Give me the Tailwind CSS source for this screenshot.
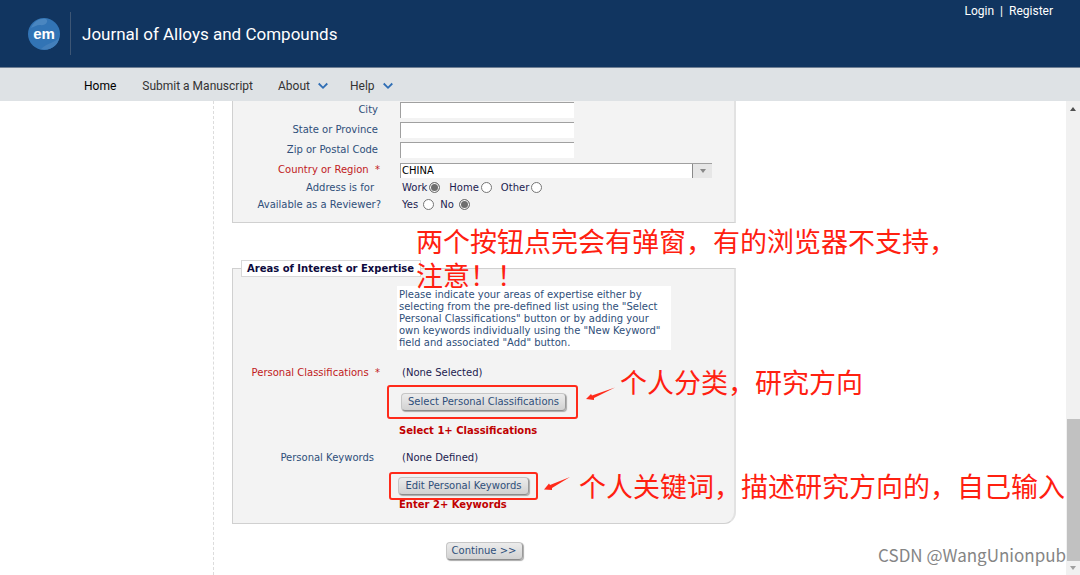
<!DOCTYPE html>
<html lang="en">
<head>
    <meta charset="UTF-8" />
    <meta name="viewport" content="width=device-width, initial-scale=1" />
    <title>Journal of Alloys and Compounds</title>
    <script src="https://cdn.jsdelivr.net/npm/@tailwindcss/browser@4"></script>
</head>
<body class="h-screen overflow-hidden bg-white flex flex-col font-['Roboto',sans-serif]">
    <header class="flex items-center shrink-0 h-[68px] pl-7 pr-[27px] bg-[#113560] border-b border-[#6f7f94] text-white">
        <svg class="w-8 h-8" viewBox="0 0 32 32" role="img" aria-label="Editorial Manager">
            <circle cx="16" cy="16" r="16" fill="#3274b5" />
            <path d="M3 10C6 3 12 0 18 1C21 3 18 8 12 7C8 7 6 9 3 10Z" fill="#4a86c0" />
            <path d="M31 19C28 25 20 24 13 31C23 33 31 27 31 19Z" fill="#437fbb" />
            <text x="16" y="21" text-anchor="middle" fill="#fff" font-family="Liberation Sans, sans-serif" font-weight="700" font-size="15">em</text>
        </svg>
        <div class="w-px h-[43px] ml-[10px] mr-[11px] bg-[#3d5675]"></div>
        <h1 class="text-[17px] leading-6">Journal of Alloys and Compounds</h1>
        <div class="self-start ml-auto pt-[3px] flex gap-[6px] text-[12px] leading-4">
            <a href="#">Login</a>
            <span>|</span>
            <a href="#">Register</a>
        </div>
    </header>

    <nav class="flex items-center shrink-0 h-[33px] pt-[2px] pl-[84px] gap-[26px] bg-[#dee2e5] text-[12px] text-[#333]">
        <a href="#" class="text-black">Home</a>
        <a href="#" class="-mr-px">Submit a Manuscript</a>
        <a href="#" class="flex items-center gap-2 -mr-1">About
            <svg class="w-[10px] h-[10px]" viewBox="0 0 10 10" fill="none" stroke="#2f6eb5" stroke-width="1.8"><path d="M0.7 2.5L5 6.8L9.3 2.5" /></svg>
        </a>
        <a href="#" class="flex items-center gap-2">Help
            <svg class="w-[10px] h-[10px]" viewBox="0 0 10 10" fill="none" stroke="#2f6eb5" stroke-width="1.8"><path d="M0.7 2.5L5 6.8L9.3 2.5" /></svg>
        </a>
    </nav>

    <div class="relative flex flex-1 min-h-0">
        <aside class="w-[214px] shrink-0 border-r border-dashed border-[#dcdcdc]"></aside>

        <main class="flex-1 min-w-0 pl-[18px] overflow-hidden font-['DejaVu_Sans',sans-serif] text-[10px] leading-3 text-[#2f4f7a]">
            <form class="w-[504px]">
                <section class="pb-[9px] bg-[#f3f3f3] border border-t-0 border-[#d0d0d0] border-r-2 border-r-[#e2e2e2]">
                    <div class="flex flex-col gap-[2px]">
                        <div class="flex items-center h-[18px]">
                            <label for="city" class="w-[145px] mr-[22px] text-right">City</label>
                            <input id="city" type="text" class="w-[174px] h-4 bg-white border-t border-l border-[#a0a0a0]" />
                        </div>
                        <div class="flex items-center h-[18px]">
                            <label for="state" class="w-[145px] mr-[22px] text-right">State or Province</label>
                            <input id="state" type="text" class="w-[174px] h-4 bg-white border-t border-l border-[#a0a0a0]" />
                        </div>
                        <div class="flex items-center h-[18px]">
                            <label for="zip" class="w-[145px] mr-[22px] text-right">Zip or Postal Code</label>
                            <input id="zip" type="text" class="w-[174px] h-4 bg-white border-t border-l border-[#a0a0a0]" />
                        </div>
                        <div class="flex items-center h-[18px]">
                            <label for="country" class="w-[147px] mr-5 text-right text-[#c11a22]">Country or Region&nbsp; *</label>
                            <div class="relative w-[312px]">
                                <select id="country" class="block w-full h-[15px] pl-[1px] appearance-none bg-white border-t border-l border-[#a0a0a0] text-black">
                                    <option>CHINA</option>
                                </select>
                                <span class="absolute right-0 top-px w-5 h-[14px] flex items-center justify-center bg-[#e6e6e6] border-l border-[#8a8a8a] pointer-events-none">
                                    <svg class="w-[6px] h-1" viewBox="0 0 6 4"><path d="M0 0H6L3 4Z" fill="#888" /></svg>
                                </span>
                            </div>
                        </div>
                    </div>
                    <div class="flex items-center h-[17px]" role="radiogroup" aria-labelledby="address-label">
                        <span id="address-label" class="w-[141px] mr-[28px] text-right">Address is for</span>
                        <div class="flex gap-[9px] text-[#1c1c50]">
                            <label class="flex items-center gap-[2px]">Work<input type="radio" name="address" checked class="w-[11px] h-[11px] appearance-none rounded-full border border-[#767676] bg-white checked:bg-[#6e6e6e] checked:shadow-[inset_0_0_0_1px_#fff]" /></label>
                            <label class="flex items-center gap-[2px]">Home<input type="radio" name="address" class="w-[11px] h-[11px] appearance-none rounded-full border border-[#767676] bg-white checked:bg-[#6e6e6e] checked:shadow-[inset_0_0_0_1px_#fff]" /></label>
                            <label class="flex items-center gap-[2px]">Other<input type="radio" name="address" class="w-[11px] h-[11px] appearance-none rounded-full border border-[#767676] bg-white checked:bg-[#6e6e6e] checked:shadow-[inset_0_0_0_1px_#fff]" /></label>
                        </div>
                    </div>
                    <div class="flex items-center h-[17px]" role="radiogroup" aria-labelledby="reviewer-label">
                        <span id="reviewer-label" class="w-[148px] mr-[21px] text-right whitespace-nowrap">Available as a Reviewer?</span>
                        <div class="flex gap-[6px] text-[#1c1c50]">
                            <label class="flex items-center gap-[5px]">Yes<input type="radio" name="reviewer" class="w-[11px] h-[11px] appearance-none rounded-full border border-[#767676] bg-white checked:bg-[#6e6e6e] checked:shadow-[inset_0_0_0_1px_#fff]" /></label>
                            <label class="flex items-center gap-[5px]">No<input type="radio" name="reviewer" checked class="w-[11px] h-[11px] appearance-none rounded-full border border-[#767676] bg-white checked:bg-[#6e6e6e] checked:shadow-[inset_0_0_0_1px_#fff]" /></label>
                        </div>
                    </div>
                </section>

                <fieldset class="mt-[37px] bg-[#f3f3f3] border border-[#d0d0d0] border-r-2 border-r-[#e2e2e2] rounded-br-xl">
                    <legend class="ml-2 w-[180px] h-[17px] px-[5px] bg-white border border-[#d8d8d8] font-bold leading-[15px] text-[#0d0a3d]">Areas of Interest or Expertise</legend>
                    <p class="w-[274px] mt-[9px] ml-[164px] pt-[3px] pb-px pl-[2px] bg-white whitespace-nowrap">
                        Please indicate your areas of expertise either by<br />
                        selecting from the pre-defined list using the "Select<br />
                        Personal Classifications" button or by adding your<br />
                        own keywords individually using the "New Keyword"<br />
                        field and associated "Add" button.
                    </p>
                    <div class="flex mt-[17px]">
                        <span class="w-[147px] mr-[7px] text-right text-[#c11a22] whitespace-nowrap">Personal Classifications&nbsp; *</span>
                        <div class="text-[#1c1c50]">
                            <p class="pl-[15px]">(None Selected)</p>
                            <div class="mt-[6px] w-[191px] h-[34px] pl-3 flex items-center border-2 border-[#ff2a1a] rounded-[3px]">
                                <button type="button" class="w-[165px] h-[18px] rounded-[4px] border border-[#c6c6c6] border-b-[#8c8c8c] border-r-[#9a9a9a] bg-linear-to-b from-[#ececec] to-[#d2d2d2] shadow-[1px_1px_1px_#aaa] text-[#2f4f7a] whitespace-nowrap">Select Personal Classifications</button>
                            </div>
                            <p class="mt-[6px] pl-3 font-bold text-[#c00000]">Select 1+ Classifications</p>
                        </div>
                    </div>
                    <div class="flex mt-[15px] pb-3">
                        <span class="w-[141px] mr-[15px] text-right">Personal Keywords</span>
                        <div class="text-[#1c1c50]">
                            <p class="pl-[13px]">(None Defined)</p>
                            <div class="mt-2 w-[149px] h-[28px] flex items-center justify-center border-2 border-[#ff2a1a] rounded-[3px]">
                                <button type="button" class="w-[131px] h-[18px] rounded-[4px] border border-[#c6c6c6] border-b-[#8c8c8c] border-r-[#9a9a9a] bg-linear-to-b from-[#ececec] to-[#d2d2d2] shadow-[1px_1px_1px_#aaa] text-[#2f4f7a] whitespace-nowrap">Edit Personal Keywords</button>
                            </div>
                            <p class="-mt-px pl-[10px] font-bold text-[#c00000]">Enter 2+ Keywords</p>
                        </div>
                    </div>
                </fieldset>

                <div class="flex justify-center mt-[18px]">
                    <button type="button" class="w-[77px] h-[18px] rounded-[4px] border border-[#c6c6c6] border-b-[#8c8c8c] border-r-[#9a9a9a] bg-linear-to-b from-[#ececec] to-[#d2d2d2] shadow-[1px_1px_1px_#aaa] text-[#2f4f7a] whitespace-nowrap">Continue &gt;&gt;</button>
                </div>
            </form>
        </main>

        <!-- scrollbar -->
        <div class="w-[14px] shrink-0 flex flex-col items-center justify-between bg-[#f1f1f1]">
            <svg class="w-[14px] h-4" viewBox="0 0 14 16"><path d="M4 10L7 6L10 10Z" fill="#505050" /></svg>
            <div class="mt-auto w-[13px] h-[142px] bg-[#c1c1c1]"></div>
            <svg class="w-[14px] h-[14px]" viewBox="0 0 14 14"><path d="M4 5H10L7 9Z" fill="#a0a0a0" /></svg>
        </div>

        <!-- notes written over the form -->
        <p lang="zh" class="absolute left-[416px] top-[123px] text-[27px] leading-[34px] text-[#ff2010] whitespace-nowrap font-['Noto_Sans_CJK_SC',sans-serif]">两个按钮点完会有弹窗，有的浏览器不支持，<br />注意！！</p>
        <p lang="zh" class="absolute left-[620px] top-[264px] text-[27px] leading-[34px] text-[#ff2010] whitespace-nowrap font-['Noto_Sans_CJK_SC',sans-serif]">个人分类，研究方向</p>
        <p lang="zh" class="absolute left-[579px] top-[368px] text-[27px] leading-[34px] text-[#ff2010] whitespace-nowrap font-['Noto_Sans_CJK_SC',sans-serif]">个人关键词，描述研究方向的，自己输入</p>
        <svg class="absolute left-[585px] top-[285px] w-[31px] h-4" viewBox="0 0 31 16"><path d="M1 13L6 8L7 9.5L30 1.5L9 12L9 14Z" fill="#ff2a1a" /></svg>
        <svg class="absolute left-[543px] top-[375px] w-[28px] h-4" viewBox="0 0 28 16"><path d="M1 13.5L6 7.5L7 9L27 1L9 12L9 14Z" fill="#ff2a1a" /></svg>
        <p class="absolute right-[14px] bottom-2 text-[17px] leading-6 text-[#858585] whitespace-nowrap font-['Noto_Sans_CJK_SC',sans-serif]">CSDN @WangUnionpub</p>
    </div>
</body>
</html>
